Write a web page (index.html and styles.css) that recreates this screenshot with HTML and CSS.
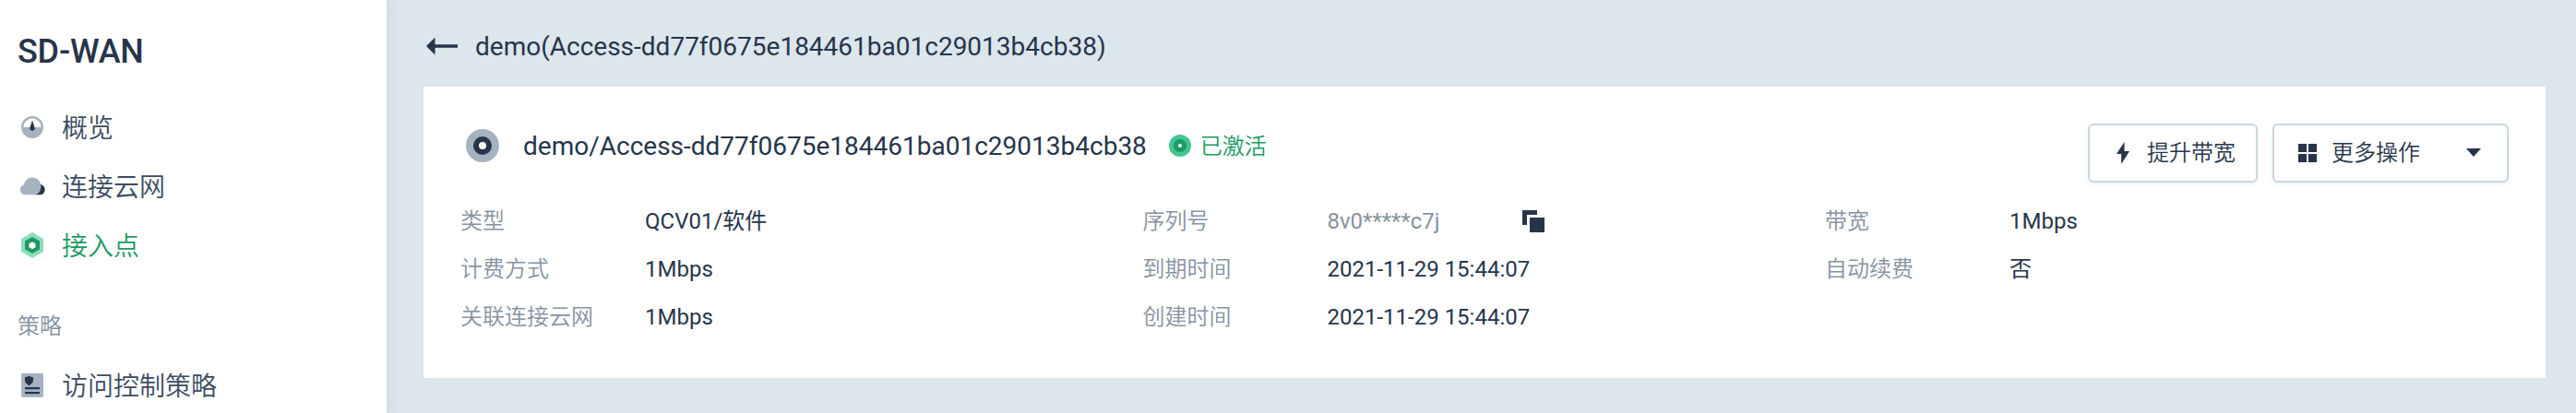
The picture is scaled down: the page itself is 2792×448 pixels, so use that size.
FILE: index.html
```html
<!DOCTYPE html>
<html lang="zh-CN">
<head>
<meta charset="utf-8">
<title>SD-WAN</title>
<link rel="stylesheet" href="styles.css">
</head>
<body>
<div class="layout">
  <nav class="sidebar">
    <h1 class="brand">SD-WAN</h1>
    <a class="nav-item">
      <svg class="nav-icon" viewBox="0 0 28 28"><circle cx="14" cy="14" r="12" fill="#a5b3c1"/><path d="M4.400 14a9.600 9.600 0 0 1 19.200 0z" fill="#fff"/><path d="M14 6.500l2.600 8a2.700 2.700 0 1 1-5.200 0z" fill="#26354a"/></svg>
      <span>概览</span>
    </a>
    <a class="nav-item">
      <svg class="nav-icon" viewBox="0 0 28 28"><path d="M16 23.300h6.200a5.500 5.500 0 0 0 5.500-5.500c0-2.800-1.700-5-4.700-5.800z" fill="#26354a"/><path d="M6.500 23.300A5.600 5.600 0 0 1 .8 17.700c0-2.400 1.600-4.300 4-5.200C6 8 9.400 4.500 14 4.500c5.400 0 9.400 4.300 9.400 9.500 0 5-2.900 9.300-6.900 9.300z" fill="#a5b3c1"/></svg>
      <span>连接云网</span>
    </a>
    <a class="nav-item active">
      <svg class="nav-icon" viewBox="0 0 28 28"><path d="M14 0l12 7v14l-12 7-12-7V7z" fill="#8fdcbd"/><path d="M14 5l8 4.600v9L14 23l-8-4.400v-9z" fill="#1b9a62"/><path d="M14 10.200l3.500 2v4L14 18.200l-3.500-2v-4z" fill="#fff"/></svg>
      <span>接入点</span>
    </a>
    <div class="nav-group">策略</div>
    <a class="nav-item">
      <svg class="nav-icon" viewBox="0 0 28 28"><rect x="2" y="1" width="24" height="26" rx="2" fill="#a5b3c1"/><path d="M6 5.200c2 0 3-1 4.500-1.500C12 4.200 13 5.200 15 5.200v3.300c0 2.600-2 4.200-4.500 5.800C8 12.700 6 11.100 6 8.500zM6 16h16v2.200H6zM6 21h16v2.200H6z" fill="#26354a"/></svg>
      <span>访问控制策略</span>
    </a>
  </nav>
  <main class="main">
    <header class="page-head">
      <svg class="back" viewBox="0 0 34 20"><path d="M0 10L9.500 .5v7.700H34v3.600H9.500v7.700z" fill="#26354a"/></svg>
      <span>demo(Access-dd77f0675e184461ba01c29013b4cb38)</span>
    </header>
    <section class="card">
      <div class="card-head">
        <svg class="node-icon" viewBox="0 0 36 36"><circle cx="18" cy="18" r="18" fill="#a5b3c1"/><circle cx="18" cy="18" r="7" fill="#fff" stroke="#26354a" stroke-width="6"/></svg>
        <span class="card-title">demo/Access-dd77f0675e184461ba01c29013b4cb38</span>
        <span class="status"><svg class="status-dot" viewBox="0 0 24 24"><circle cx="12" cy="12" r="12" fill="#43c591"/><circle cx="12" cy="12" r="7" fill="#1b9a62"/><circle cx="12" cy="12" r="2" fill="#fff"/></svg><span class="status-text">已激活</span></span>
        <div class="actions">
          <button class="btn btn-upgrade"><svg class="bolt" viewBox="0 0 14 24"><path d="M8.500 0L0 13h5.200v11L14 10H8.500z" fill="#26354a"/></svg>提升带宽</button>
          <button class="btn btn-more"><svg class="grid" viewBox="0 0 20 20"><path d="M0 0h9v9H0zM11 0h9v9h-9zM0 11h9v9H0zM11 11h9v9h-9z" fill="#26354a"/></svg>更多操作<svg class="caret" viewBox="0 0 16 10"><path d="M0 0h16L8 9z" fill="#26354a"/></svg></button>
        </div>
      </div>
      <div class="details">
        <dl class="column">
          <dt>类型</dt><dd>QCV01/软件</dd>
          <dt>计费方式</dt><dd>1Mbps</dd>
          <dt>关联连接云网</dt><dd>1Mbps</dd>
        </dl>
        <dl class="column">
          <dt>序列号</dt><dd class="serial"><span>8v0*****c7j</span><svg class="copy" viewBox="0 0 24 24"><path d="M0 0h16v5H5v11H0zM8 8h16v16H8z" fill="#26354a"/></svg></dd>
          <dt>到期时间</dt><dd>2021-11-29 15:44:07</dd>
          <dt>创建时间</dt><dd>2021-11-29 15:44:07</dd>
        </dl>
        <dl class="column">
          <dt>带宽</dt><dd>1Mbps</dd>
          <dt>自动续费</dt><dd>否</dd>
        </dl>
      </div>
    </section>
  </main>
</div>
</body>
</html>
```
FILE: styles.css
```css
* { box-sizing: border-box; }
body { margin: 0; font-family: Roboto, "Noto Sans CJK SC", sans-serif; color: #26354a; }
svg { display: block; flex: none; }
.layout { display: flex; width: 2792px; height: 448px; overflow: hidden; background: #dce6ed; }
.sidebar { position: relative; z-index: 1; flex: none; width: 419px; background: #fff; box-shadow: 2px 0 14px rgba(38, 53, 74, .09); }
.brand { margin: 0; padding: 29px 19px 0; height: 106px; font-size: 36px; line-height: 54px; font-weight: 500; letter-spacing: -.2px; }
.nav-item { display: flex; align-items: center; gap: 18px; height: 64px; padding-left: 21px; font-size: 28px; line-height: 40px; font-weight: 350; color: #3a4b61; }
.nav-item span { padding-top: 3px; }
.nav-item.active { color: #1b9a62; }
.nav-icon { width: 28px; height: 28px; }
.nav-group { height: 88px; padding: 36px 19px 0; font-size: 24px; line-height: 40px; font-weight: 350; color: #8592a1; }
.main { flex: 1; padding: 0 33px 0 40px; }
.page-head { display: flex; align-items: center; height: 94px; padding: 6px 0 0 3px; gap: 19px; font-size: 28px; }
.back { width: 34px; height: 20px; }
.card { width: 2300px; height: 316px; padding: 40px 40px 0; background: #fff; }
.card-head { display: flex; height: 80px; }
.node-icon { width: 36px; height: 36px; margin: 6px 26px 0 6px; }
.card-title { margin-top: 3px; font-size: 28px; line-height: 44px; }
.status { display: flex; align-items: center; gap: 10px; height: 44px; margin: 2px 0 0 24px; font-size: 24px; font-weight: 350; color: #1b9a62; }
.status-dot { width: 24px; height: 24px; }
.status-text { padding-bottom: 4px; }
.actions { display: flex; gap: 16px; margin-left: auto; }
.btn { display: flex; align-items: center; height: 64px; padding: 0 28px; border: 2px solid #cbd6e2; border-radius: 6px; background: #fff; box-shadow: 0 2px 4px rgba(27, 154, 98, .12); font: 350 24px/36px Roboto, "Noto Sans CJK SC", sans-serif; color: #26354a; }
.btn-upgrade { width: 184px; padding: 0 0 0 29px; }
.btn-more { width: 256px; padding-left: 26px; }
.bolt { width: 14px; height: 24px; margin-right: 19px; }
.grid { width: 20px; height: 20px; margin-right: 16px; }
.caret { width: 16px; height: 10px; margin-left: auto; }
.details { display: grid; grid-template-columns: repeat(3, 739.5px); }
.column { display: grid; grid-template-columns: 200px 1fr; grid-auto-rows: 52px; align-content: start; align-items: center; margin: 0; font-size: 24px; line-height: 36px; }
.column dt { font-weight: 350; color: #8592a1; }
.column dd { margin: 0; font-weight: 400; }
.column .serial { display: flex; align-items: center; justify-content: space-between; width: 235px; color: #8592a1; }
.copy { width: 24px; height: 24px; }
```
